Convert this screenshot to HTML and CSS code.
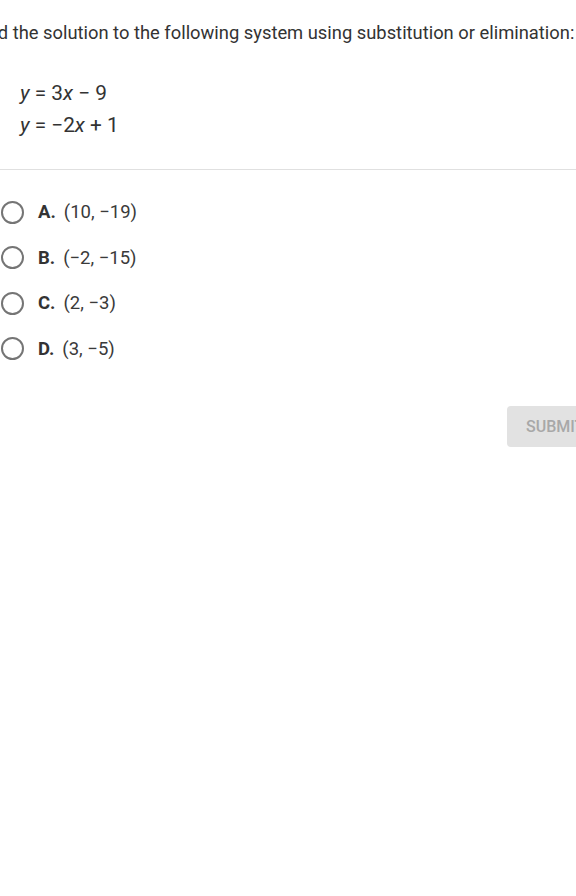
FILE: index.html
```html
<!DOCTYPE html>
<html>
<head>
<meta charset="utf-8">
<link rel="stylesheet" href="styles.css">
</head>
<body>
<div class="page">
  <div class="question">
    <p class="prompt">Find the solution to the following system using substitution or elimination:</p>
    <div class="system">
      <div class="eq"><i>y</i> = 3<i>x</i> − 9</div>
      <div class="eq"><i>y</i> = −2<i>x</i> + 1</div>
    </div>
  </div>
  <div class="options">
    <label class="opt"><span class="radio"></span><b>A.</b><span>(10, −19)</span></label>
    <label class="opt"><span class="radio"></span><b>B.</b><span>(−2, −15)</span></label>
    <label class="opt"><span class="radio"></span><b>C.</b><span>(2, −3)</span></label>
    <label class="opt"><span class="radio"></span><b>D.</b><span>(3, −5)</span></label>
  </div>
  <div class="actions">
    <button class="submit">SUBMIT</button>
  </div>
</div>
</body>
</html>
```
FILE: styles.css
```css
html, body {
  margin: 0;
  padding: 0;
  background: #fff;
  overflow: hidden;
}
body {
  width: 576px;
  height: 896px;
  font-family: Roboto, "Noto Sans", sans-serif;
  color: #333;
}
.page {
  width: 576px;
}
.question {
  padding-top: 21px;
  border-bottom: 1px solid #e0e0e0;
  padding-bottom: 28px;
}
.prompt {
  margin: 0 0 0 -27px;
  font-size: 18.35px;
  line-height: 24px;
  white-space: nowrap;
}
.system {
  margin-top: 32px;
  padding-left: 20px;
  font-size: 20.8px;
  line-height: 32px;
}
.eq i { font-style: italic; }
.options {
  padding-top: 30px;
  display: flex;
  flex-direction: column;
  gap: 21.5px;
}
.opt {
  display: flex;
  align-items: center;
  height: 24px;
  font-size: 18.5px;
  color: #3a3a3a;
}
.radio {
  width: 23px;
  height: 23px;
  border: 2px solid #757575;
  border-radius: 50%;
  box-sizing: border-box;
  margin-left: 1px;
  margin-right: 14px;
}
.opt b {
  font-weight: 700;
  color: #333;
  margin-right: 8px;
}
.actions {
  padding-left: 507px;
  padding-top: 45px;
}
.submit {
  display: block;
  height: 41px;
  width: 120px;
  border: none;
  border-radius: 4px;
  background: #e2e2e2;
  color: #a8a8a8;
  font-family: Roboto, sans-serif;
  font-weight: 500;
  font-size: 16px;
  text-align: left;
  padding: 0 0 0 19px;
}
```
